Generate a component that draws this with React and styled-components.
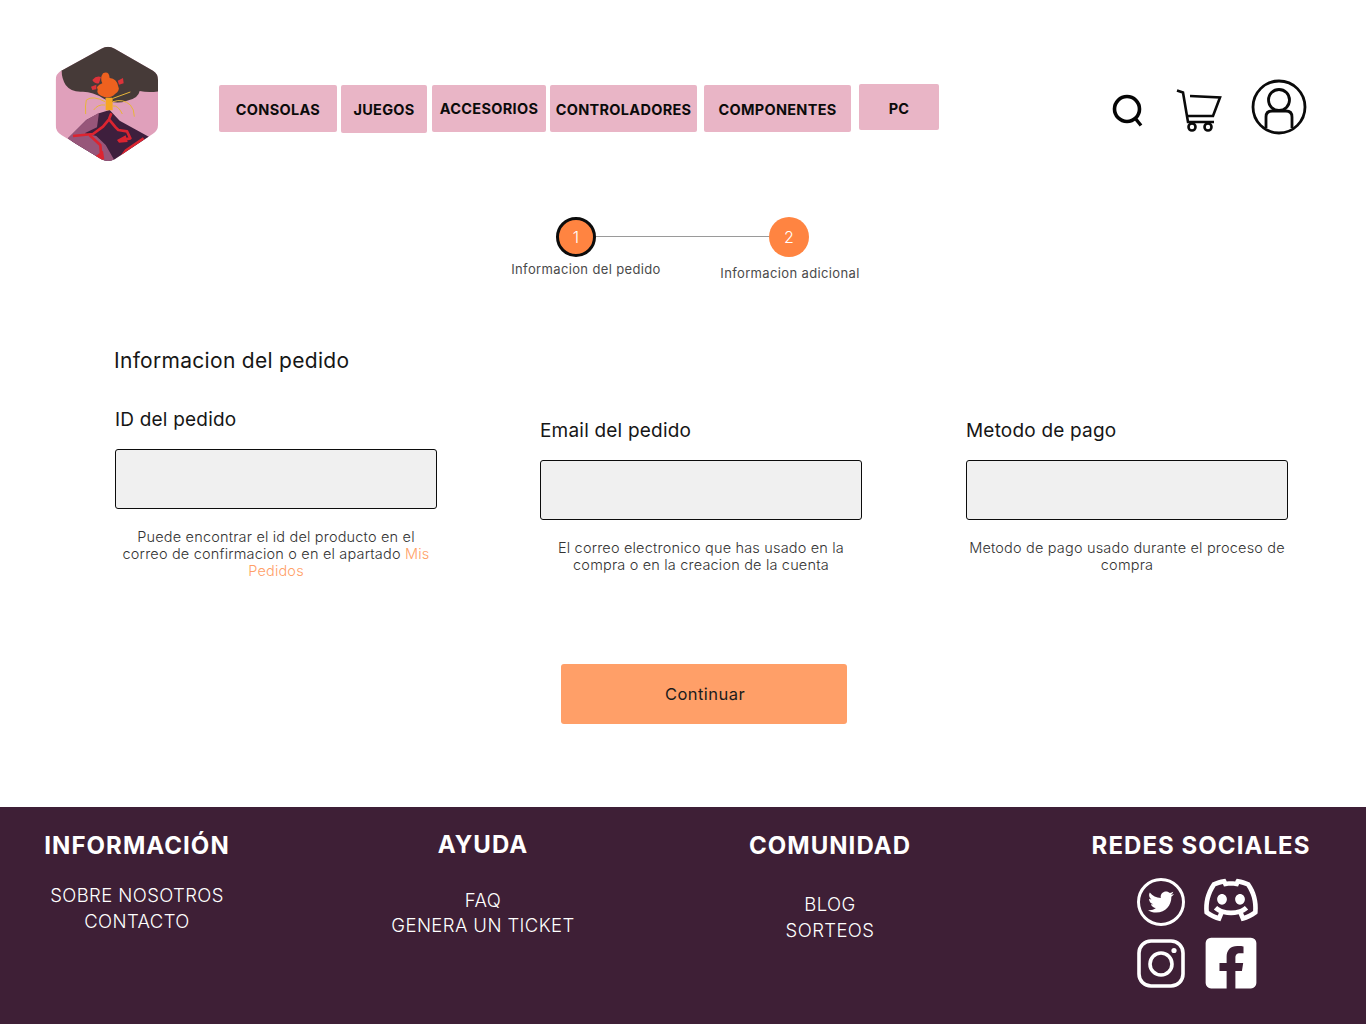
import React from "react";
import styled, { createGlobalStyle } from "styled-components";
import { FaTwitter, FaFacebookSquare } from "react-icons/fa";
import { RiDiscordLine } from "react-icons/ri";

const GlobalStyle = createGlobalStyle`
  body {
    margin: 0;
    background: #fff;
    font-family: Inter, "Noto Sans", "Liberation Sans", sans-serif;
    color: #111;
  }
`;

const Page = styled.div`
  width: 1366px;
  height: 1024px;
  overflow: hidden;
`;

const Header = styled.header`
  height: 190px;
  display: flex;
  padding-left: 55px;
  box-sizing: border-box;
`;

const LogoBox = styled.svg`
  width: 104px;
  height: 116px;
  margin-top: 46px;
  flex: none;
`;

const Nav = styled.nav`
  display: flex;
  align-items: flex-start;
  margin: 84px 0 0 60px;
`;

const NavItem = styled.a`
  box-sizing: border-box;
  width: ${(p) => p.$w}px;
  height: ${(p) => p.$h}px;
  margin-left: ${(p) => p.$gap}px;
  margin-top: ${(p) => p.$top}px;
  padding-top: ${(p) => p.$pad}px;
  display: flex;
  align-items: center;
  justify-content: center;
  background: #e9b5c6;
  border-radius: 2px;
  font-size: 14.5px;
  font-weight: 700;
  letter-spacing: 0.3px;
  color: #0b0b0b;
  white-space: nowrap;
`;

const Tools = styled.div`
  display: flex;
  align-items: flex-start;
  margin-left: 173px;
`;

const SearchIcon = styled.svg`
  width: 32px;
  height: 34px;
  margin-top: 94px;
`;

const CartIcon = styled.svg`
  width: 46px;
  height: 44px;
  margin: 89px 0 0 32px;
`;

const UserIcon = styled.svg`
  width: 56px;
  height: 56px;
  margin: 79px 0 0 29px;
`;

const Stepper = styled.section`
  margin-top: 27px;
  height: 130px;
`;

const StepRow = styled.div`
  display: flex;
  align-items: center;
  margin-left: 556px;
`;

const StepDot = styled.div`
  box-sizing: border-box;
  width: 40px;
  height: 40px;
  border-radius: 50%;
  border: ${(p) => (p.$active ? "3px solid #0c0c0c" : "none")};
  background: #ff8441;
  color: #fff;
  font-size: 16px;
  font-weight: 300;
  display: flex;
  align-items: center;
  justify-content: center;
`;

const StepLine = styled.div`
  width: 173px;
  height: 1px;
  margin-bottom: 2px;
  background: #9a9a9a;
`;

const LabelRow = styled.div`
  display: flex;
  align-items: flex-start;
  margin-left: 506px;
`;

const StepLabel = styled.div`
  width: ${(p) => p.$w}px;
  margin-top: ${(p) => p.$top}px;
  text-align: center;
  font-size: 13px;
  line-height: 16px;
  letter-spacing: 0.36px;
  color: #4a4a4a;
  white-space: nowrap;
`;

const FormSection = styled.main`
  padding-left: 114px;
`;

const Title = styled.h2`
  margin: 1px 0 0;
  font-size: 21px;
  line-height: 26px;
  font-weight: 400;
  letter-spacing: 0.3px;
  color: #161616;
`;

const Columns = styled.div`
  display: flex;
  align-items: flex-start;
  margin-top: 33px;
`;

const Field = styled.div`
  width: 322px;
  flex: none;
  margin-left: ${(p) => p.$left}px;
  margin-top: ${(p) => p.$top}px;
`;

const FieldLabel = styled.label`
  display: block;
  font-size: 19px;
  line-height: 24px;
  letter-spacing: 0.2px;
  padding-top: 1px;
  margin-bottom: 17px;
  color: #161616;
`;

const Input = styled.input`
  display: block;
  box-sizing: border-box;
  width: 322px;
  height: 60px;
  background: #f0f0f0;
  border: 1px solid #0c0c0c;
  border-radius: 3px;
  padding: 0 12px;
`;

const Hint = styled.p`
  margin: 19px 0 0;
  font-size: 14.5px;
  line-height: 17px;
  letter-spacing: 0.18px;
  font-weight: 300;
  text-align: center;
  color: #333;
  white-space: nowrap;
`;

const HintLink = styled.a`
  color: #ff9f68;
`;

const Submit = styled.button`
  display: block;
  width: 286px;
  height: 60px;
  margin: 85px 0 0 447px;
  padding: 0 0 0 2px;
  border: none;
  border-radius: 3px;
  background: #ff9f68;
  font-family: inherit;
  font-size: 16.5px;
  letter-spacing: 0.45px;
  color: #1b1b1b;
`;

const Footer = styled.footer`
  margin-top: 83px;
  height: 217px;
  background: #3e1f36;
  color: #fff;
  box-sizing: border-box;
  padding: 24px 0 0 17px;
  display: grid;
  grid-template-columns: 346px 347px 371px 240px;
`;

const FooterCol = styled.div`
  width: 240px;
  text-align: center;
  white-space: nowrap;
`;

const FooterTitle = styled.h3`
  margin: 0 -30px;
  font-size: 24px;
  line-height: 30px;
  font-weight: 700;
  letter-spacing: 1.05px;
  position: relative;
  top: ${(p) => p.$top || 0}px;
`;

const FooterLinks = styled.ul`
  list-style: none;
  margin: ${(p) => p.$gap}px 0 0;
  padding: 0;
  font-size: 18.5px;
  line-height: ${(p) => p.$line}px;
  letter-spacing: 0.4px;
  font-weight: 300;
`;

const Socials = styled.div`
  display: grid;
  grid-template-columns: 48px 54px;
  grid-template-rows: 48px 49px;
  column-gap: 19px;
  row-gap: 13px;
  margin: 17px 0 0 56px;
  justify-items: center;
  align-items: center;
`;

const TwitterBadge = styled.div`
  box-sizing: border-box;
  width: 48px;
  height: 48px;
  border: 3px solid #fff;
  border-radius: 50%;
  display: flex;
  align-items: center;
  justify-content: center;
  font-size: 26px;
`;

const DiscordIcon = styled(RiDiscordLine)`
  margin-bottom: 4px;
`;

const FacebookIcon = styled(FaFacebookSquare)`
  margin-bottom: 2px;
`;

const Logo = () => (
  <LogoBox viewBox="46 48 312 348">
    <defs>
      <clipPath id="hex">
        <path d="M205 50 Q215 50 225 56 L340 122 Q355 131 355 150 L355 285 Q355 302 340 311 L225 388 Q205 398 185 388 L65 315 Q48 305 48 285 L48 150 Q48 131 65 122 L185 56 Q195 50 205 50Z" />
      </clipPath>
    </defs>
    <g clipPath="url(#hex)">
      <rect x="40" y="40" width="330" height="360" fill="#e0a0bb" />
      <path d="M40 40 H370 V182 Q330 190 300 183 Q296 206 262 212 Q225 226 190 205 Q160 185 130 185 Q95 188 78 165 Q66 145 66 122 L40 130Z" fill="#463a38" />
      <path d="M85 325 L140 270 L178 250 L210 240 L240 272 L330 322 L230 400 H180Z" fill="#3e1f3d" />
      <path d="M85 325 L140 270 L178 248 L172 292 L135 310 L170 318 L198 345 L225 392 L205 400 L180 400Z" fill="#97567a" />
      <path d="M100 318 L160 312 L190 290 L208 268 L215 250 M208 268 L228 292 L236 300 L262 304 L272 325 L238 332 M150 316 L182 345 L185 382 M312 325 L258 362 L234 395" fill="none" stroke="#dc2430" strokeWidth="8" strokeLinejoin="round" />
      <path d="M168 378 L190 362 L194 388 L175 392Z M232 330 L258 316 L264 336 L238 338Z" fill="#dc2430" />
      <path d="M190 130 Q208 122 210 144 Q232 146 236 170 Q242 180 226 192 Q216 204 196 202 Q168 194 174 178 Q166 170 188 160 Q180 144 190 130Z" fill="#ee611f" />
      <path d="M158 150 Q170 136 184 141 L178 160 Q164 162 158 150Z M234 152 L250 144 L252 160 L238 164Z M154 170 L170 164 L170 178 L158 180Z" fill="#dc333a" />
      <rect x="198" y="203" width="21" height="38" rx="2" fill="#f6a623" />
      <path d="M196 215 Q160 195 140 210 Q136 225 138 252 M196 225 Q175 222 162 240 M220 215 Q250 205 272 225 Q284 238 284 260 M220 228 Q235 225 248 252 M220 205 L272 186" fill="none" stroke="#e8b53a" strokeWidth="3" />
    </g>
  </LogoBox>
);

const navItems = [
  { label: "CONSOLAS", w: 118, h: 47, gap: 0, top: 1, pad: 2 },
  { label: "JUEGOS", w: 86, h: 48, gap: 4, top: 1, pad: 1 },
  { label: "ACCESORIOS", w: 114, h: 47, gap: 5, top: 1, pad: 0 },
  { label: "CONTROLADORES", w: 147, h: 47, gap: 4, top: 1, pad: 2 },
  { label: "COMPONENTES", w: 147, h: 47, gap: 7, top: 1, pad: 2 },
  { label: "PC", w: 80, h: 46, gap: 8, top: 0, pad: 2 },
];

const App = () => (
  <Page>
    <GlobalStyle />
    <Header>
      <Logo />
      <Nav>
        {navItems.map((n) => (
          <NavItem key={n.label} $w={n.w} $h={n.h} $gap={n.gap} $top={n.top} $pad={n.pad}>
            {n.label}
          </NavItem>
        ))}
      </Nav>
      <Tools>
        <SearchIcon viewBox="0 0 32 34" fill="none" stroke="#050505" strokeWidth="3.6">
          <circle cx="15" cy="15" r="12.5" />
          <path d="M23 24 L29 31.5" strokeWidth="3.4" />
        </SearchIcon>
        <CartIcon viewBox="0 0 46 44" fill="none" stroke="#0a0a0a" strokeWidth="2.6">
          <path d="M1 1.5 L7 3.5 L12 33 H38" />
          <path d="M14 7 L44 8.5 L37 27 H11" />
          <circle cx="16" cy="38" r="3.5" />
          <circle cx="32" cy="38" r="3.5" />
        </CartIcon>
        <UserIcon viewBox="0 0 56 56" fill="none" stroke="#0a0a0a" strokeWidth="2.8">
          <circle cx="28" cy="28" r="26" />
          <circle cx="28" cy="21" r="10.5" />
          <path d="M15 49 V38 Q15 32 21 32 H35 Q41 32 41 38 V49" />
        </UserIcon>
      </Tools>
    </Header>

    <Stepper>
      <StepRow>
        <StepDot $active>1</StepDot>
        <StepLine />
        <StepDot>2</StepDot>
      </StepRow>
      <LabelRow>
        <StepLabel $w={160} $top={4}>Informacion del pedido</StepLabel>
        <StepLabel $w={248} $top={8}>Informacion adicional</StepLabel>
      </LabelRow>
    </Stepper>

    <FormSection>
      <Title>Informacion del pedido</Title>
      <Columns>
        <Field $left={1} $top={0}>
          <FieldLabel>ID del pedido</FieldLabel>
          <Input />
          <Hint>
            Puede encontrar el id del producto en el
            <br />
            correo de confirmacion o en el apartado <HintLink>Mis</HintLink>
            <br />
            <HintLink>Pedidos</HintLink>
          </Hint>
        </Field>
        <Field $left={103} $top={11}>
          <FieldLabel>Email del pedido</FieldLabel>
          <Input />
          <Hint>
            El correo electronico que has usado en la
            <br />
            compra o en la creacion de la cuenta
          </Hint>
        </Field>
        <Field $left={104} $top={11}>
          <FieldLabel>Metodo de pago</FieldLabel>
          <Input />
          <Hint>
            Metodo de pago usado durante el proceso de
            <br />
            compra
          </Hint>
        </Field>
      </Columns>
      <Submit>Continuar</Submit>
    </FormSection>

    <Footer>
      <FooterCol>
        <FooterTitle>INFORMACIÓN</FooterTitle>
        <FooterLinks $gap={21} $line={26}>
          <li>SOBRE NOSOTROS</li>
          <li>CONTACTO</li>
        </FooterLinks>
      </FooterCol>
      <FooterCol>
        <FooterTitle $top={-1}>AYUDA</FooterTitle>
        <FooterLinks $gap={27} $line={25}>
          <li>FAQ</li>
          <li>GENERA UN TICKET</li>
        </FooterLinks>
      </FooterCol>
      <FooterCol>
        <FooterTitle>COMUNIDAD</FooterTitle>
        <FooterLinks $gap={30} $line={26}>
          <li>BLOG</li>
          <li>SORTEOS</li>
        </FooterLinks>
      </FooterCol>
      <FooterCol>
        <FooterTitle>REDES SOCIALES</FooterTitle>
        <Socials>
          <TwitterBadge>
            <FaTwitter />
          </TwitterBadge>
          <DiscordIcon size={62} />
          <svg width="48" height="49" viewBox="0 0 48 49" fill="none" stroke="#fff" strokeWidth="3.6">
            <rect x="2" y="2" width="44" height="45" rx="12" />
            <circle cx="24" cy="25" r="11" />
            <circle cx="37" cy="11.5" r="2.6" fill="#fff" stroke="none" />
          </svg>
          <FacebookIcon size={58} />
        </Socials>
      </FooterCol>
    </Footer>
  </Page>
);

export default App;
